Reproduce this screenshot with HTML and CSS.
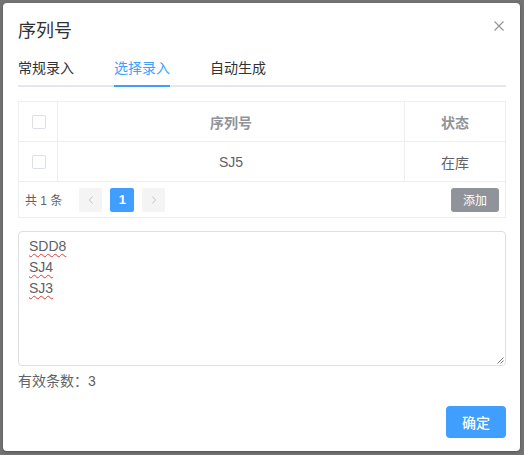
FILE: index.html
```html
<!DOCTYPE html>
<html lang="zh-CN">
<head>
<meta charset="utf-8">
<title>序列号</title>
<link rel="stylesheet" href="styles.css">
</head>
<body>
<div class="dialog">
  <div class="dialog-header">
    <span class="dialog-title">序列号</span>
    <span class="close-btn">
      <svg width="12" height="12" viewBox="0 0 12 12"><path d="M1.5 1.5L10.5 10.5M10.5 1.5L1.5 10.5" stroke="#909399" stroke-width="1.1" fill="none"/></svg>
    </span>
  </div>
  <div class="tabs">
    <div class="tab"><span class="tab-label">常规录入</span></div>
    <div class="tab active"><span class="tab-label">选择录入</span></div>
    <div class="tab"><span class="tab-label">自动生成</span></div>
  </div>
  <div class="table">
    <div class="row head">
      <div class="cell check"><span class="checkbox"></span></div>
      <div class="cell">序列号</div>
      <div class="cell last">状态</div>
    </div>
    <div class="row body">
      <div class="cell check"><span class="checkbox"></span></div>
      <div class="cell">SJ5</div>
      <div class="cell last">在库</div>
    </div>
    <div class="footer">
      <span class="total">共 1 条</span>
      <div class="pager">
        <span class="pbtn nav"><svg width="8" height="10" viewBox="0 0 8 10"><path d="M5.5 1.5L2.5 5L5.5 8.5" stroke="#c0c4cc" stroke-width="1" fill="none"/></svg></span>
        <span class="pbtn current">1</span>
        <span class="pbtn nav"><svg width="8" height="10" viewBox="0 0 8 10"><path d="M2.5 1.5L5.5 5L2.5 8.5" stroke="#c0c4cc" stroke-width="1" fill="none"/></svg></span>
      </div>
      <span class="add-btn">添加</span>
    </div>
  </div>
  <div class="textarea">
    <div class="line"><span class="miss">SDD8</span></div>
    <div class="line"><span class="miss">SJ4</span></div>
    <div class="line"><span class="miss">SJ3</span></div>
    <svg class="grip" width="8" height="8" viewBox="0 0 8 8"><path d="M7.5 1.5L1.5 7.5M7.5 4.5L4.5 7.5" stroke="#777" stroke-width="1" fill="none"/></svg>
  </div>
  <div class="count">有效条数：3</div>
  <div class="dialog-footer">
    <span class="ok-btn">确定</span>
  </div>
</div>
</body>
</html>
```
FILE: styles.css
```css
html, body {
  margin: 0;
  padding: 0;
}
body {
  background: #737373;
  width: 524px;
  height: 455px;
  padding: 3px 0 0 3px;
  box-sizing: border-box;
  font-family: "Liberation Sans", "Noto Sans CJK SC", sans-serif;
  overflow: hidden;
}
.dialog {
  position: relative;
  width: 517px;
  height: 448px;
  background: #fff;
  border-radius: 4px;
  box-sizing: border-box;
  padding: 16px 14px 0 15px;
  display: flex;
  flex-direction: column;
  box-shadow: 0 1px 3px rgba(0,0,0,0.3);
}
.dialog-header {
  height: 24px;
  display: flex;
  align-items: center;
}
.dialog-title {
  font-size: 18px;
  line-height: 24px;
  color: #303133;
}
.close-btn {
  position: absolute;
  top: 17px;
  right: 15px;
  width: 12px;
  height: 12px;
  display: flex;
}
.tabs {
  margin-top: 6px;
  display: flex;
  border-bottom: 2px solid #e4e7ed;
  height: 38px;
  box-sizing: border-box;
}
.tab {
  margin-right: 40px;
  font-size: 14px;
  color: #303133;
  display: flex;
}
.tab-label {
  padding-top: 2px;
  line-height: 34px;
  height: 36px;
  box-sizing: border-box;
  margin-bottom: -2px;
  border-bottom: 2px solid transparent;
}
.tab.active {
  color: #409eff;
}
.tab.active .tab-label {
  border-bottom-color: #409eff;
  height: 38px;
}
.table {
  margin-top: 14px;
  border: 1px solid #ebeef5;
  font-size: 14px;
  color: #606266;
}
.row {
  display: grid;
  grid-template-columns: 39px 1fr 100px;
  height: 40px;
  border-bottom: 1px solid #ebeef5;
  box-sizing: border-box;
}
.cell {
  display: flex;
  align-items: center;
  justify-content: center;
  border-right: 1px solid #ebeef5;
}
.cell.last {
  border-right: none;
}
.row.head .cell {
  color: #909399;
  font-weight: bold;
}
.checkbox {
  width: 14px;
  height: 14px;
  border: 1px solid #dcdfe6;
  border-radius: 2px;
  box-sizing: border-box;
  background: #fff;
  margin-left: 1px;
}
.footer {
  height: 35px;
  display: flex;
  align-items: center;
  padding: 0 6px 0 6px;
}
.total {
  font-size: 12px;
  color: #606266;
}
.pager {
  display: flex;
  gap: 8px;
  margin-left: 17px;
}
.pbtn {
  width: 23px;
  height: 24px;
  border-radius: 2px;
  background: #f4f4f5;
  display: flex;
  align-items: center;
  justify-content: center;
  font-size: 13px;
}
.pbtn.current {
  width: 24px;
  background: #409eff;
  color: #fff;
  font-weight: bold;
}
.add-btn {
  margin-left: auto;
  width: 48px;
  height: 24px;
  border-radius: 3px;
  background: #909399;
  color: #fff;
  font-size: 12px;
  display: flex;
  align-items: center;
  justify-content: center;
}
.textarea {
  position: relative;
  margin-top: 13px;
  height: 135px;
  border: 1px solid #dcdfe6;
  border-radius: 4px;
  box-sizing: border-box;
  padding: 4px 10px;
  font-size: 14px;
  line-height: 21px;
  color: #606266;
}
.miss {
  text-decoration: underline wavy #e03a3a;
  text-decoration-thickness: 1px;
  text-underline-offset: 2px;
}
.grip {
  position: absolute;
  right: 1px;
  bottom: 1px;
}
.count {
  margin-top: 5px;
  font-size: 14px;
  line-height: 20px;
  color: #606266;
}
.dialog-footer {
  margin-top: 15px;
  display: flex;
  justify-content: flex-end;
}
.ok-btn {
  width: 60px;
  height: 32px;
  border-radius: 4px;
  background: #409eff;
  color: #fff;
  font-size: 14px;
  font-weight: 500;
  display: flex;
  align-items: center;
  justify-content: center;
}
```
